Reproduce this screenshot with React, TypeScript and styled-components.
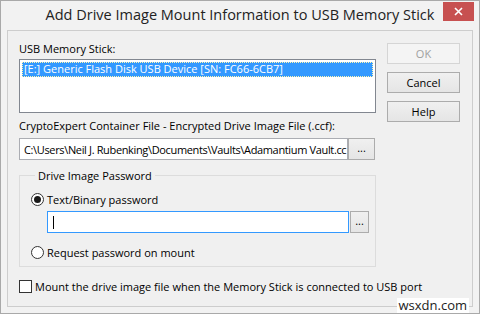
import * as React from 'react'
import styled, { createGlobalStyle } from 'styled-components'

const GlobalStyle = createGlobalStyle`
  html, body {
    margin: 0;
    padding: 0;
    background: #f0f0f0;
  }
  body {
    font-family: 'Open Sans', 'Noto Sans', sans-serif;
    font-size: 11px;
    color: #000;
  }
`

const Window = styled.div`
  position: relative;
  width: 480px;
  height: 314px;
  box-sizing: border-box;
  border: 1px solid #a9a9a9;
  background: #f2f2f2;
  display: flex;
  flex-direction: column;
`

const TitleBar = styled.div`
  position: relative;
  height: 29px;
  display: flex;
  align-items: center;
  justify-content: center;
`

const Title = styled.div`
  font-size: 14.5px;
  color: #222;
  margin-top: -2px;
`

const CloseButton = styled.div`
  position: absolute;
  top: 1px;
  right: 5px;
  width: 31px;
  height: 19px;
  background: #c75050;
  display: flex;
  align-items: center;
  justify-content: center;
`

const Client = styled.div`
  margin: 0 6px 6px 6px;
  flex: 1;
  border: 1px solid #cdcdcd;
  background: #f0f0f0;
  padding: 10px 12px 0 11px;
  display: flex;
  gap: 11px;
`

const Main = styled.div`
  width: 357px;
  display: flex;
  flex-direction: column;
`

const Side = styled.div`
  display: flex;
  flex-direction: column;
  gap: 8px;
  padding-top: 2px;
`

const Label = styled.div<{ $top?: number }>`
  line-height: 15px;
  height: 15px;
  white-space: nowrap;
  margin-top: ${p => p.$top ?? 0}px;
`

const ListBox = styled.div`
  margin-top: 3px;
  height: 54px;
  box-sizing: border-box;
  border: 1px solid #828790;
  background: #fff;
  padding: 2px;
`

const ListItem = styled.div<{ $selected?: boolean }>`
  height: 15px;
  line-height: 14px;
  padding-left: 2px;
  box-sizing: border-box;
  background: ${p => (p.$selected ? '#3399ff' : 'transparent')};
  color: ${p => (p.$selected ? '#fff' : '#000')};
  outline: ${p => (p.$selected ? '1px dotted #fff6b0' : 'none')};
  outline-offset: -1px;
  white-space: nowrap;
`

const Row = styled.div<{ $indent?: number; $top?: number }>`
  display: flex;
  margin-left: ${p => p.$indent ?? 0}px;
  margin-top: ${p => p.$top ?? 0}px;
`

const TextBox = styled.div<{ $width: number; $focused?: boolean }>`
  width: ${p => p.$width}px;
  flex-shrink: 0;
  height: 22px;
  box-sizing: border-box;
  border: 1px solid ${p => (p.$focused ? '#3399ff' : '#abadb3')};
  background: #fff;
  padding: 0 4px;
  display: flex;
  align-items: center;
  white-space: nowrap;
  overflow: hidden;
`

const PathText = styled.span`
  letter-spacing: -0.35px;
`

const Caret = styled.span`
  display: inline-block;
  width: 1px;
  height: 13px;
  background: #000;
  margin-left: 1px;
`

const Button = styled.div<{ $disabled?: boolean }>`
  width: 73px;
  height: 21px;
  box-sizing: border-box;
  border: 1px solid ${p => (p.$disabled ? '#d5d5d5' : '#acacac')};
  background: ${p =>
    p.$disabled ? '#f4f4f4' : 'linear-gradient(#f0f0f0, #e5e5e5)'};
  color: ${p => (p.$disabled ? '#a0a0a0' : '#000')};
  display: flex;
  align-items: center;
  justify-content: center;
`

const DotsButton = styled.div<{ $width: number; $gap?: number }>`
  width: ${p => p.$width}px;
  flex-shrink: 0;
  height: 22px;
  margin-left: ${p => p.$gap ?? 0}px;
  box-sizing: border-box;
  border: 1px solid #acacac;
  background: linear-gradient(#f0f0f0, #e5e5e5);
  display: flex;
  align-items: center;
  justify-content: center;
  padding-bottom: 3px;
`

const Group = styled.fieldset`
  margin: 8px 0 0 0;
  padding: 8px 0 6px 11px;
  border: 1px solid #dcdcdc;
  min-width: 0;
`

const Legend = styled.legend`
  padding: 0 3px;
  margin-left: 4px;
  line-height: 15px;
`

const Option = styled.div<{ $top?: number }>`
  display: flex;
  align-items: center;
  height: 16px;
  margin-top: ${p => p.$top ?? 0}px;
  white-space: nowrap;
`

const Radio = styled.span<{ $checked?: boolean }>`
  flex-shrink: 0;
  width: 13px;
  height: 13px;
  box-sizing: border-box;
  border-radius: 50%;
  border: 1px solid #333;
  background: #fff;
  margin-right: 3px;
  display: flex;
  align-items: center;
  justify-content: center;
  &::after {
    content: '';
    display: ${p => (p.$checked ? 'block' : 'none')};
    width: 7px;
    height: 7px;
    border-radius: 50%;
    background: #1a1a1a;
  }
`

const CheckBox = styled.span`
  flex-shrink: 0;
  width: 13px;
  height: 13px;
  box-sizing: border-box;
  border: 1px solid #333;
  background: #fff;
  margin-right: 3px;
`

const Watermark = styled.div`
  position: absolute;
  right: 10px;
  bottom: 0;
  padding: 0 2px;
  background: #fff;
  color: #222;
  font-size: 13px;
  line-height: 15px;
`

export default function App() {
  return (
    <>
      <GlobalStyle />
      <Window>
        <TitleBar>
          <Title>Add Drive Image Mount Information to USB Memory Stick</Title>
          <CloseButton>
            <svg width="9" height="9" viewBox="0 0 9 9">
              <path d="M1 1 L8 8 M8 1 L1 8" stroke="#fff" strokeWidth="1.6" />
            </svg>
          </CloseButton>
        </TitleBar>
        <Client>
          <Main>
            <Label>USB Memory Stick:</Label>
            <ListBox>
              <ListItem $selected>
                [E:] Generic Flash Disk USB Device [SN: FC66-6CB7]
              </ListItem>
            </ListBox>
            <Label $top={5}>
              CryptoExpert Container File - Encrypted Drive Image File (.ccf):
            </Label>
            <Row $top={5}>
              <TextBox $width={329}>
                <PathText>
                  C:\Users\Neil J. Rubenking\Documents\Vaults\Adamantium Vault.cc
                </PathText>
              </TextBox>
              <DotsButton $width={27}>...</DotsButton>
            </Row>
            <Group>
              <Legend>Drive Image Password</Legend>
              <Option>
                <Radio $checked />
                Text/Binary password
              </Option>
              <Row $indent={16} $top={4}>
                <TextBox $width={302} $focused>
                  <Caret />
                </TextBox>
                <DotsButton $width={19} $gap={1}>
                  ...
                </DotsButton>
              </Row>
              <Option $top={11}>
                <Radio />
                Request password on mount
              </Option>
            </Group>
            <Option $top={11}>
              <CheckBox />
              Mount the drive image file when the Memory Stick is connected to
              USB port
            </Option>
          </Main>
          <Side>
            <Button $disabled>OK</Button>
            <Button>Cancel</Button>
            <Button>Help</Button>
          </Side>
        </Client>
        <Watermark>wsxdn.com</Watermark>
      </Window>
    </>
  )
}
